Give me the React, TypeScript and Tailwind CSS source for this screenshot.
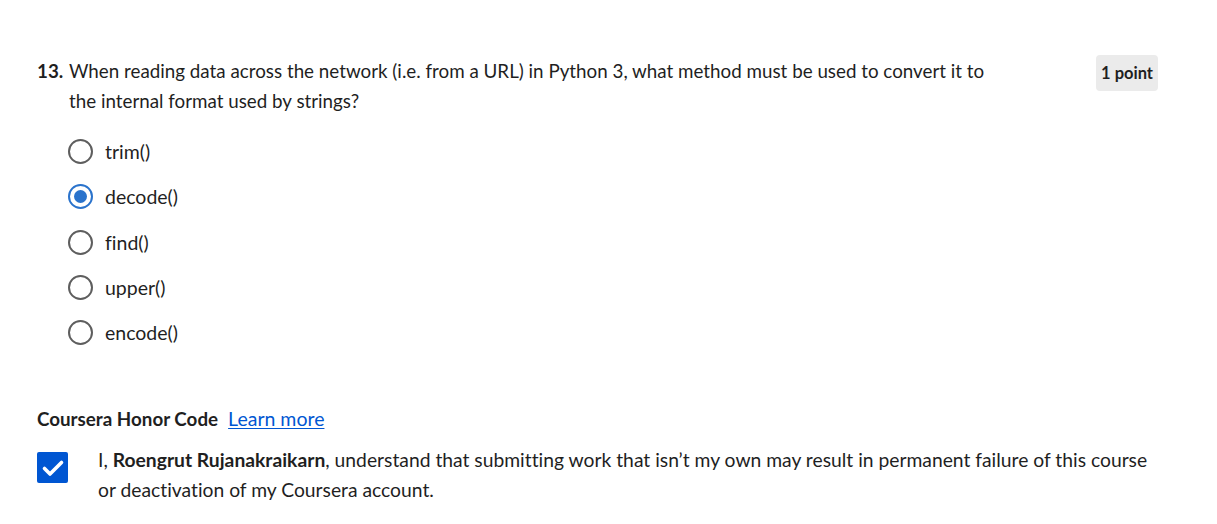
const options = ["trim()", "decode()", "find()", "upper()", "encode()"];
const selected = "decode()";

function Radio({ checked }: { checked: boolean }) {
  return (
    <span
      className={`flex h-[25px] w-[25px] shrink-0 items-center justify-center rounded-full border-2 ${
        checked ? "border-[#2a73cc]" : "border-[#5e5e5e]"
      }`}
    >
      {checked && <span className="h-[13px] w-[13px] rounded-full bg-[#2a73cc]" />}
    </span>
  );
}

export default function App() {
  return (
    <div
      className="min-h-screen w-full bg-white text-[#1f1f1f] [font-variant-ligatures:none]"
      style={{ fontFamily: "Lato, 'Noto Sans', sans-serif" }}
    >
      <div className="pl-[37px] pr-[59px] pt-[56px]">
        {/* Question */}
        <div className="flex items-start justify-between">
          <div className="flex text-[18.8px] leading-[30px]">
            <span className="w-[32px] shrink-0 font-bold">13.</span>
            <p className="w-[935px]">
              When reading data across the network (i.e. from a URL) in Python 3, what method must be used to convert it to
              the internal format used by strings?
            </p>
          </div>
          <span className="mt-[-1px] rounded-[4px] bg-[#ebebeb] px-[5px] py-[7px] text-[16.5px] font-bold leading-[22px]">
            1 point
          </span>
        </div>

        {/* Options */}
        <div className="mt-[13px] flex flex-col pl-[31px]">
          {options.map((opt) => (
            <label key={opt} className="flex h-[45.3px] items-center gap-[12px]">
              <Radio checked={opt === selected} />
              <span className="text-[19.5px]">{opt}</span>
            </label>
          ))}
        </div>

        {/* Honor code */}
        <div className="mt-[52px] flex items-center gap-[10px] text-[18.8px] leading-[24px]">
          <span className="font-bold">Coursera Honor Code</span>
          <a href="#" className="text-[19.5px] text-[#0056d2] underline underline-offset-2">
            Learn more
          </a>
        </div>
        <div className="mt-[14px] flex items-start gap-[30px]">
          <span className="mt-[7px] flex h-[31px] w-[31px] shrink-0 items-center justify-center rounded-[2px] bg-[#0056d2]">
            <svg width="24" height="24" viewBox="0 0 24 24" fill="none">
              <path d="M3.5 12.5l5.5 5.5L20.5 6.5" stroke="white" strokeWidth="3.6" strokeLinecap="round" strokeLinejoin="round" />
            </svg>
          </span>
          <p className="w-[1075px] text-[19.3px] leading-[30px]">
            I, <span className="font-bold">Roengrut Rujanakraikarn</span>, understand that submitting work that isn’t my own may result in permanent failure of this course
            or deactivation of my Coursera account.
          </p>
        </div>
      </div>
    </div>
  );
}
